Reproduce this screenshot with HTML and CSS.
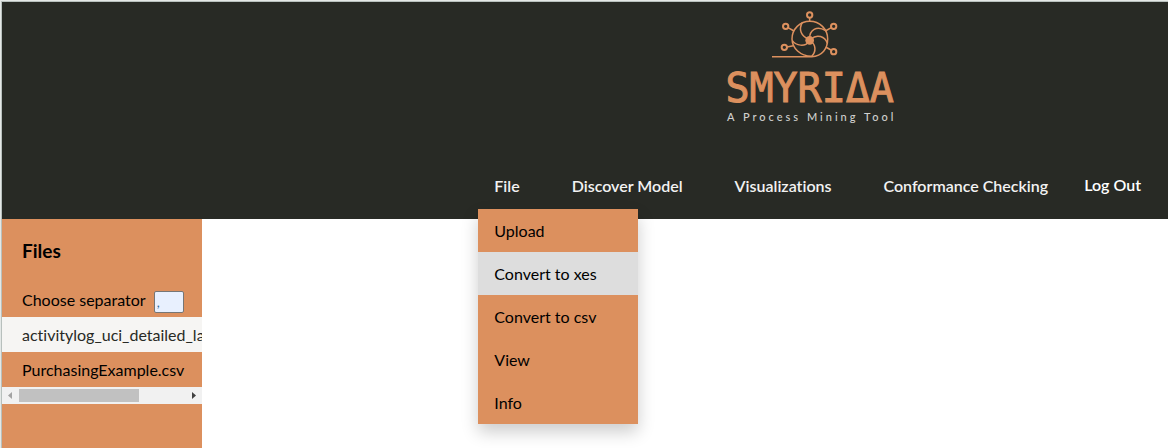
FILE: index.html
```html
<!DOCTYPE html>
<html lang="en">
<head>
<meta charset="utf-8">
<title>SMYRIΔA</title>
<link rel="stylesheet" href="styles.css">
</head>
<body>
<header class="header">
  <div class="masthead">
    <div class="logo">
      <svg class="logo-mark" viewBox="180 30 204 144" aria-hidden="true">
        <g fill="none" stroke="#dc905e" stroke-width="4.500">
          <path d="M183 170H302C334 168 350 146 350 117A53 53 0 1 0 243 117C244 145 267 168 302 169"/>
          <path d="M293 118C270 108 262 89 274 67"/>
          <path d="M296 116C295 91 317 75 344 92"/>
          <path d="M300 118C318 100 342 110 349 130"/>
          <path d="M299 123C315 134 316 155 302 169"/>
          <path d="M294 124C282 142 255 137 244 122"/>
          <path d="M296 54V63M231 83L249 93M361 83L343 93M228 141L247 137M360 150L344 141"/>
          <g stroke-width="6">
            <circle cx="296" cy="45" r="8"/>
            <circle cx="224" cy="79" r="8"/>
            <circle cx="368" cy="79" r="8"/>
            <circle cx="220" cy="142" r="8"/>
            <circle cx="368" cy="155" r="8"/>
          </g>
        </g>
        <circle cx="296" cy="121" r="13" fill="#dc905e"/>
      </svg>
      <div class="logo-name">SMYRIΔA</div>
      <div class="logo-tagline">A Process Mining Tool</div>
    </div>
    <nav class="nav">
      <div class="dropdown">
        <button class="nav-button" type="button" aria-expanded="true">File</button>
        <div class="menu">
          <a class="menu-item" href="#">Upload</a>
          <a class="menu-item menu-item-active" href="#">Convert to xes</a>
          <a class="menu-item" href="#">Convert to csv</a>
          <a class="menu-item" href="#">View</a>
          <a class="menu-item" href="#">Info</a>
        </div>
      </div>
      <button class="nav-button" type="button">Discover Model</button>
      <button class="nav-button" type="button">Visualizations</button>
      <button class="nav-button" type="button">Conformance Checking</button>
      <a class="logout" href="#">Log Out</a>
    </nav>
  </div>
</header>
<main class="main">
  <aside class="sidebar">
    <h3 class="sidebar-title">Files</h3>
    <div class="separator">
      <label for="separator">Choose separator</label>
      <input class="separator-input" id="separator" type="text" value=",">
    </div>
    <div class="files">
      <a class="file file-active" href="#">activitylog_uci_detailed_labour.xes</a>
      <a class="file" href="#">PurchasingExample.csv</a>
    </div>
    <div class="scrollbar">
      <svg class="scroll-arrow" viewBox="0 0 17 17" aria-hidden="true"><path d="M10 5v7L6 8.500z" fill="#a3a3a3"/></svg>
      <div class="scroll-track"><div class="scroll-thumb"></div></div>
      <svg class="scroll-arrow" viewBox="0 0 17 17" aria-hidden="true"><path d="M7 5v7l4-3.500z" fill="#404040"/></svg>
    </div>
  </aside>
</main>
</body>
</html>
```
FILE: styles.css
```css
* {
  box-sizing: border-box;
}

html {
  border-top: 1px solid #e4e8e6;
  border-left: 1px solid #e4e8e6;
}

body {
  margin: 0;
  min-height: calc(100vh - 1px);
  display: flex;
  flex-direction: column;
  border-top: 1px solid #b8c0bd;
  border-left: 1px solid #b8c0bd;
  background: #fff;
  color: #000;
  font: 16px/19px Lato, sans-serif;
  font-variant-ligatures: none;
}

a {
  color: inherit;
  text-decoration: none;
}

.header {
  display: flex;
  justify-content: flex-end;
  padding: 8px 27px 10px 0;
  background: #282a25;
}

.masthead {
  display: flex;
  flex-direction: column;
  align-items: center;
  gap: 38px;
}

.logo {
  display: flex;
  flex-direction: column;
  align-items: center;
}

.logo-mark {
  width: 68px;
  height: 48px;
  margin-right: 10px;
}

.logo-name {
  margin-top: 8px;
  color: #dc905e;
  font: 40px/44px "DejaVu Sans Mono", monospace;
  -webkit-text-stroke: 1px #dc905e;
}

.logo-tagline {
  padding-left: 4px;
  color: #d0d0ce;
  font: 500 11px/14px Lato, sans-serif;
  letter-spacing: 3px;
}

.nav {
  display: flex;
  align-items: center;
  gap: 20px;
}

.dropdown {
  position: relative;
}

.nav-button {
  display: block;
  padding: 14px 16px;
  border: 0;
  background: none;
  color: #f2f2f2;
  font: 600 16px/19px Lato, sans-serif;
  font-variant-ligatures: none;
  white-space: nowrap;
}

.logout {
  padding-bottom: 2px;
  color: #fff;
  font-weight: 600;
}

.menu {
  position: absolute;
  top: 100%;
  left: 0;
  z-index: 1;
  min-width: 160px;
  background: #dc905e;
  box-shadow: 0 8px 16px rgba(0, 0, 0, 0.2);
}

.menu-item {
  display: block;
  padding: 12px 16px;
}

.menu-item-active {
  background: #ddd;
}

.main {
  flex: 1;
  display: flex;
}

.sidebar {
  width: 200px;
  background: #dc905e;
}

.sidebar-title {
  margin: 0;
  padding: 20px 20px 28px;
  font-size: 19px;
  line-height: 23px;
}

.separator {
  display: flex;
  align-items: flex-end;
  gap: 8px;
  padding: 0 18px 4px 20px;
  white-space: nowrap;
}

.separator label {
  padding-bottom: 4px;
}

.separator-input {
  width: 30px;
  height: 22px;
  padding: 1px 2px;
  border: 1px solid #767676;
  border-radius: 2px;
  background: #e8f0fe;
  color: #2b6a94;
  font: 13px/16px Lato, sans-serif;
}

.files {
  overflow: hidden;
}

.file {
  display: block;
  padding: 8px 20px;
  white-space: nowrap;
}

.file-active {
  background: #f6f5f3;
  color: #282a25;
}

.scrollbar {
  display: flex;
  height: 17px;
  background: #f1f1f1;
}

.scroll-arrow {
  width: 17px;
  height: 17px;
}

.scroll-track {
  flex: 1;
  padding: 2px 0;
}

.scroll-thumb {
  width: 72%;
  height: 13px;
  background: #c1c1c1;
}
```
